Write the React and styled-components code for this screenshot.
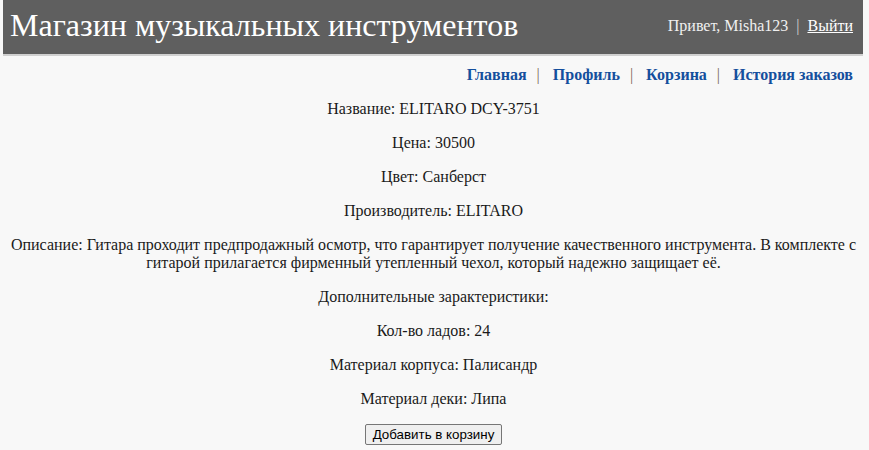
import React from "react";
import styled, { createGlobalStyle } from "styled-components";

const Global = createGlobalStyle`
  html, body { margin: 0; padding: 0; background: #f8f8f8; }
  body { font-family: "Liberation Serif", "Times New Roman", serif; color: #1a1a1a; }
`;

const Header = styled.header`
  margin: 0 6px 0 3px;
  height: 54px;
  background: #5f5f5f;
  border-bottom: 2px solid #d0d0d0;
  display: flex;
  align-items: center;
  justify-content: space-between;
  padding: 0 10px 0 7px;
`;

const Title = styled.h1`
  margin: 0;
  font-size: 32px;
  font-weight: normal;
  color: #ffffff;
  line-height: 1;
  padding-bottom: 4px;
`;

const UserBox = styled.div`
  font-size: 16px;
  color: #f0f0f0;
  display: flex;
  align-items: center;
  gap: 8px;
  padding-bottom: 2px;
`;

const Sep = styled.span`
  color: #cfcfcf;
`;

const Logout = styled.a`
  color: #ffffff;
  text-decoration: underline;
`;

const Nav = styled.nav`
  display: flex;
  justify-content: flex-end;
  align-items: center;
  padding: 10px 16px 0 0;
  line-height: 18px;
  font-size: 16px;
  font-weight: bold;
`;

const NavLink = styled.a`
  color: #144f9d;
  text-decoration: none;
`;

const NavSep = styled.span`
  color: #7a6a5a;
  font-weight: normal;
  margin: 0 13px 0 10px;
`;

const Content = styled.main`
  text-align: center;
  padding: 0 10px 0 8px;
`;

const Line = styled.p`
  margin: 16px 0;
  font-size: 16px;
  line-height: 18px;
`;

const Button = styled.button`
  font-family: "Liberation Sans", Arial, sans-serif;
  font-size: 13.33px;
  color: #000;
  background: #efefef;
  border: 1px solid #767676;
  border-radius: 2px;
  padding: 2px 7px;
`;

export default function App() {
  const rows = [
    "Название: ELITARO DCY-3751",
    "Цена: 30500",
    "Цвет: Санберст",
    "Производитель: ELITARO",
    "Описание: Гитара проходит предпродажный осмотр, что гарантирует получение качественного инструмента. В комплекте с гитарой прилагается фирменный утепленный чехол, который надежно защищает её.",
    "Дополнительные зарактеристики:",
    "Кол-во ладов: 24",
    "Материал корпуса: Палисандр",
    "Материал деки: Липа",
  ];
  return (
    <>
      <Global />
      <Header>
        <Title>Магазин музыкальных инструментов</Title>
        <UserBox>
          <span>Привет, Misha123</span>
          <Sep>|</Sep>
          <Logout href="#">Выйти</Logout>
        </UserBox>
      </Header>
      <Nav>
        <NavLink href="#">Главная</NavLink>
        <NavSep>|</NavSep>
        <NavLink href="#">Профиль</NavLink>
        <NavSep>|</NavSep>
        <NavLink href="#">Корзина</NavLink>
        <NavSep>|</NavSep>
        <NavLink href="#">История заказов</NavLink>
      </Nav>
      <Content>
        {rows.map((r, i) => (
          <Line key={i}>{r}</Line>
        ))}
        <Button>Добавить в корзину</Button>
      </Content>
    </>
  );
}
